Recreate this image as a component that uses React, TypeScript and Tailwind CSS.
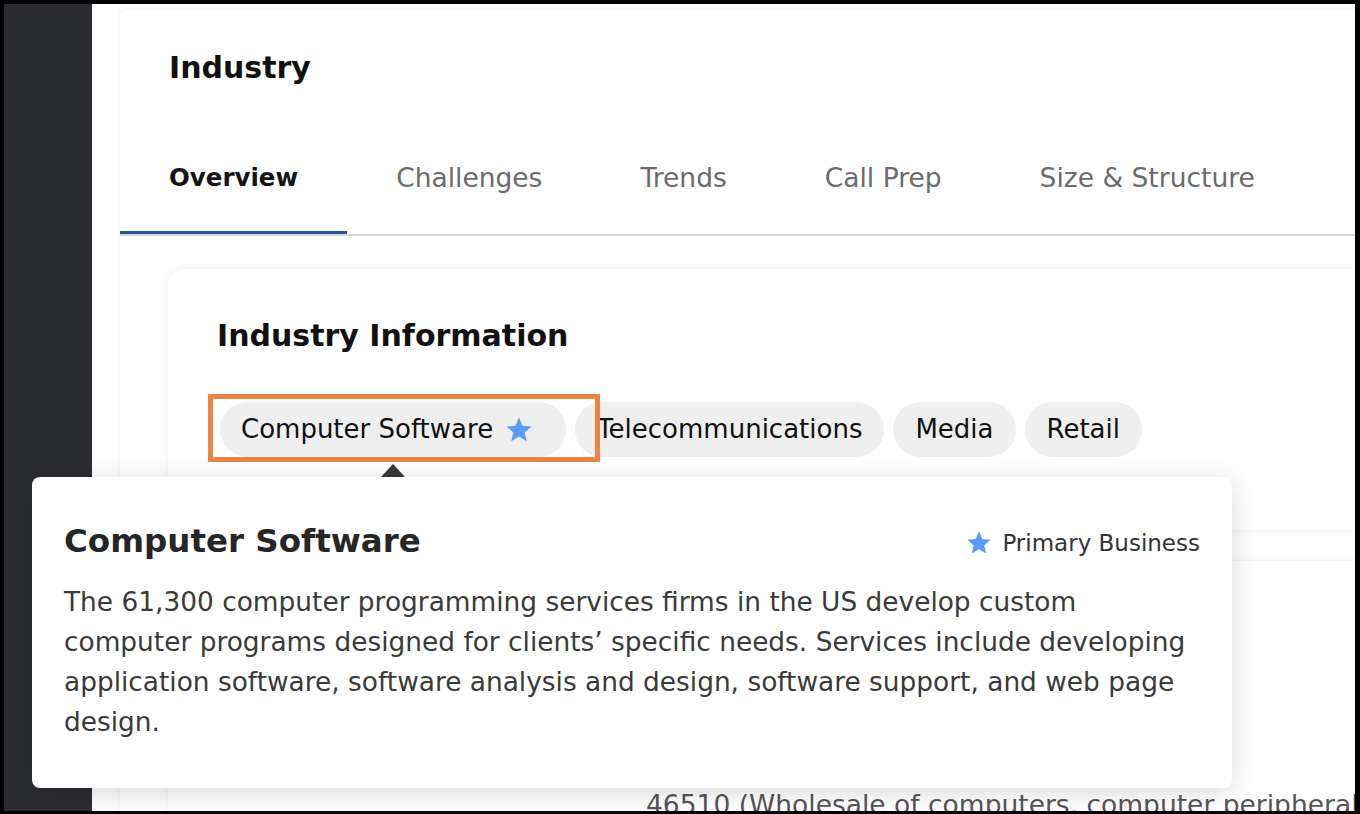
import React from "react"

const tabs = ["Overview", "Challenges", "Trends", "Call Prep", "Size & Structure"]
const industries = ["Computer Software", "Telecommunications", "Media", "Retail"]

function StarIcon({ className }: { className?: string }) {
  return (
    <svg viewBox="0 0 24 24" className={className} fill="currentColor">
      <path d="M12 17.27 18.18 21l-1.64-7.03L22 9.24l-7.19-.61L12 2 9.19 8.63 2 9.24l5.46 4.73L5.82 21z" />
    </svg>
  )
}

export default function App() {
  return (
    <div className="h-[814px] w-[1360px] overflow-hidden bg-black pb-[3px] pl-[4px] pr-[5px] pt-[4px]">
      <div className="relative flex h-full overflow-hidden bg-white">
        {/* Sidebar */}
        <aside className="w-[88px] shrink-0 bg-[#2a2c30]" />

        {/* Main */}
        <main className="min-w-0 flex-1 pl-[28px] pt-[6px]">
          <div className="w-[1300px] rounded-lg bg-white pb-10 shadow-[0_0_6px_rgba(0,0,0,0.08)]">
            <div className="pl-[49px] pt-[40px]">
              <h1 className="font-['DejaVu_Sans',sans-serif] text-[30px] font-bold leading-[36px] text-[#111]">
                Industry
              </h1>
            </div>

            {/* Tabs */}
            <nav className="mt-[39px] flex border-b-2 border-[#d6d6d6]">
              {tabs.map((t, i) => (
                <div
                  key={t}
                  className={
                    i === 0
                      ? "border-b-[3px] border-[#2352a6] px-[49px] pb-[37px] pt-[37px] font-['DejaVu_Sans',sans-serif] text-[24.5px] font-bold leading-[32px] text-[#151515]"
                      : "border-b-[3px] border-transparent px-[49px] pb-[37px] pt-[37px] font-['DejaVu_Sans',sans-serif] text-[26.5px] leading-[32px] text-[#6b6b6b]"
                  }
                >
                  {t}
                </div>
              ))}
            </nav>

            <div className="pl-[48px] pt-[33px]">
              {/* Industry Information card */}
              <section className="w-[1250px] rounded-2xl bg-white pb-[73px] pl-[49px] pt-[49px] shadow-[0_0_8px_rgba(0,0,0,0.07)]">
                <h2 className="font-['DejaVu_Sans',sans-serif] text-[30px] font-bold leading-[36px] text-[#111]">
                  Industry Information
                </h2>
                <div className="mt-[48px] flex gap-[9px] pl-[3px]">
                  {industries.map((name, i) => (
                    <div
                      key={name}
                      className={
                        i === 0
                          ? "flex h-[55px] items-center gap-[11px] rounded-full bg-[#efefef] pl-[21px] pr-[32px] font-['DejaVu_Sans',sans-serif] text-[26px] text-[#111]"
                          : "flex h-[55px] items-center rounded-full bg-[#efefef] px-[22px] font-['DejaVu_Sans',sans-serif] text-[26px] text-[#111]"
                      }
                    >
                      {name}
                      {i === 0 && <StarIcon className="h-[30px] w-[30px] text-[#5b9cf6]" />}
                    </div>
                  ))}
                </div>
              </section>

              {/* NAICS card, mostly under the tooltip */}
              <section className="mt-[31px] h-[300px] w-[1250px] rounded-2xl bg-white pl-[478px] pt-[226px] shadow-[0_0_8px_rgba(0,0,0,0.07)]">
                <p className="whitespace-nowrap font-['DejaVu_Sans',sans-serif] text-[26.5px] leading-[36px] text-[#555]">
                  46510 (Wholesale of computers, computer peripheral
                </p>
              </section>
            </div>
          </div>
        </main>

        {/* Highlight annotation */}
        <div className="absolute left-[204px] top-[390px] h-[68px] w-[392px] border-[5px] border-[#ee8444]" />

        {/* Tooltip arrow */}
        <div className="absolute left-[377px] top-[460px] h-0 w-0 border-x-[12px] border-b-[13px] border-x-transparent border-b-[#3a3a3a]" />

        {/* Tooltip */}
        <div className="absolute left-[28px] top-[473px] h-[311px] w-[1200px] rounded-lg bg-white px-[32px] pt-[44px] shadow-[0_4px_24px_rgba(0,0,0,0.16)]">
          <div className="flex items-center justify-between">
            <h3 className="font-['DejaVu_Sans',sans-serif] text-[32.5px] font-bold leading-[40px] text-[#262626]">
              Computer Software
            </h3>
            <div className="flex items-center gap-[9px] pt-[4px]">
              <StarIcon className="h-[28px] w-[28px] text-[#5b9cf6]" />
              <span className="font-['DejaVu_Sans',sans-serif] text-[23px] text-[#333]">Primary Business</span>
            </div>
          </div>
          <p className="mt-[21px] whitespace-nowrap font-['DejaVu_Sans',sans-serif] text-[26.4px] leading-[40px] text-[#3a3a3a]">
            The 61,300 computer programming services firms in the US develop custom
            <br />
            computer programs designed for clients’ specific needs. Services include developing
            <br />
            application software, software analysis and design, software support, and web page
            <br />
            design.
          </p>
        </div>
      </div>
    </div>
  )
}
